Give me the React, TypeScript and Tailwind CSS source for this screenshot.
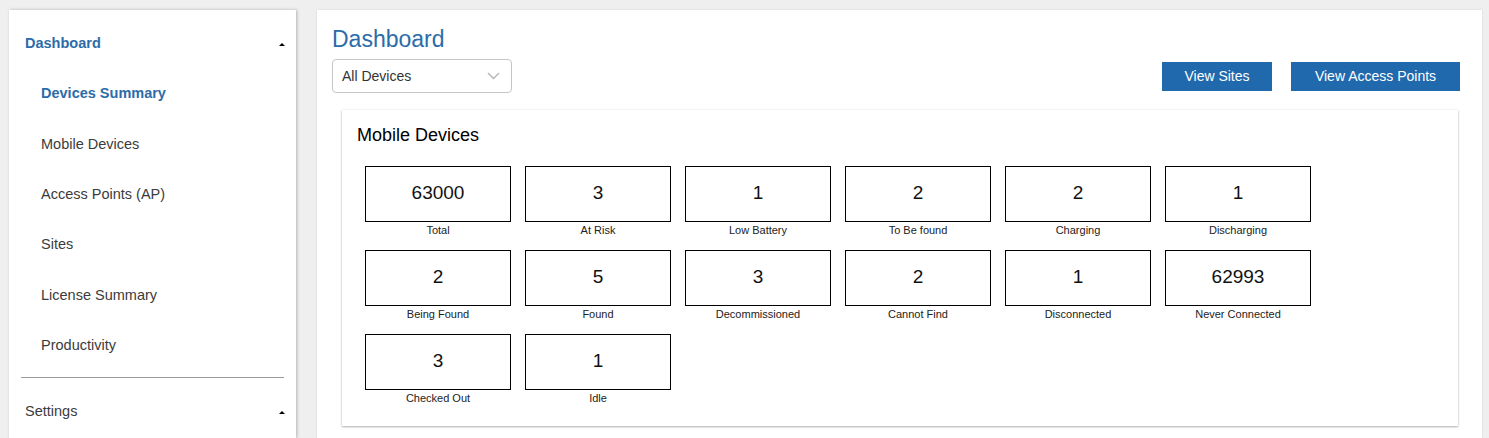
import React from 'react';

const navItems = [
  { label: 'Devices Summary', active: true },
  { label: 'Mobile Devices' },
  { label: 'Access Points (AP)' },
  { label: 'Sites' },
  { label: 'License Summary' },
  { label: 'Productivity' },
];

const stats = [
  { value: '63000', label: 'Total' },
  { value: '3', label: 'At Risk' },
  { value: '1', label: 'Low Battery' },
  { value: '2', label: 'To Be found' },
  { value: '2', label: 'Charging' },
  { value: '1', label: 'Discharging' },
  { value: '2', label: 'Being Found' },
  { value: '5', label: 'Found' },
  { value: '3', label: 'Decommissioned' },
  { value: '2', label: 'Cannot Find' },
  { value: '1', label: 'Disconnected' },
  { value: '62993', label: 'Never Connected' },
  { value: '3', label: 'Checked Out' },
  { value: '1', label: 'Idle' },
];

function Caret() {
  return <span className="w-0 h-0 border-l-[3px] border-r-[3px] border-b-[3px] border-l-transparent border-r-transparent border-b-black" />;
}

export default function App() {
  return (
    <div className="h-screen overflow-hidden bg-[#efefef] flex pt-[10px] pl-[9px] pr-[7px] gap-[21px] font-['Liberation_Sans',Arial,sans-serif]">
      {/* Sidebar */}
      <aside className="w-[287px] shrink-0 bg-white shadow-[1px_0_3px_rgba(0,0,0,0.25)] pt-[9px] text-[14.5px]">
        <div className="h-[50px] flex items-center justify-between pl-[16px] pr-[11px]">
          <span className="font-bold text-[#2c6ca8]">Dashboard</span>
          <Caret />
        </div>
        {navItems.map((item) => (
          <div
            key={item.label}
            className={`h-[50.4px] flex items-center pl-[32px] ${item.active ? 'font-bold text-[#2c6ca8]' : 'text-[#3b3b3b]'}`}
          >
            {item.label}
          </div>
        ))}
        <div className="mx-[12px] mt-[6px] mb-[9px] border-t border-[#9a9a9a]" />
        <div className="h-[50px] flex items-center justify-between pl-[16px] pr-[11px] text-[#3b3b3b]">
          <span>Settings</span>
          <Caret />
        </div>
      </aside>

      {/* Main */}
      <main className="flex-1 bg-white shadow-[0_0_2px_rgba(0,0,0,0.12)] pl-[15px] pr-[22px] pt-[15px]">
        <h1 className="text-[23px] leading-[28px] text-[#2c6ca8]">Dashboard</h1>
        <div className="flex items-center justify-between mt-[6px]">
          <div className="w-[180px] h-[34px] border border-[#c6c6c6] rounded-[4px] flex items-center justify-between pl-[9px] pr-[11px]">
            <span className="text-[14px] text-[#333]">All Devices</span>
            <svg width="13" height="8" viewBox="0 0 13 8" fill="none" stroke="#b5b5b5" strokeWidth="1.4">
              <path d="M1 1l5.5 5.5L12 1" />
            </svg>
          </div>
          <div className="flex gap-[19px]">
            <button className="w-[110px] h-[29px] bg-[#2069ad] text-white text-[14px]">View Sites</button>
            <button className="w-[169px] h-[29px] bg-[#2069ad] text-white text-[14px]">View Access Points</button>
          </div>
        </div>

        <section className="ml-[10px] mr-[2px] mt-[17px] bg-white shadow-[0_1px_2px_rgba(0,0,0,0.3),0_0_2px_rgba(0,0,0,0.08)] pt-[14px] pl-[15px] pb-[8px]">
          <h2 className="text-[18px] leading-[22px] text-black">Mobile Devices</h2>
          <div className="grid grid-cols-[repeat(6,146px)] gap-x-[14px] ml-[8px] mt-[20px]">
            {stats.map((s) => (
              <div key={s.label} className="h-[84px] flex flex-col">
                <div className="h-[56px] border border-black flex items-center justify-center pb-[2px] text-[19px] text-[#111]">
                  {s.value}
                </div>
                <div className="text-[11px] leading-[16px] text-center text-[#222]">{s.label}</div>
              </div>
            ))}
          </div>
        </section>
      </main>
    </div>
  );
}
